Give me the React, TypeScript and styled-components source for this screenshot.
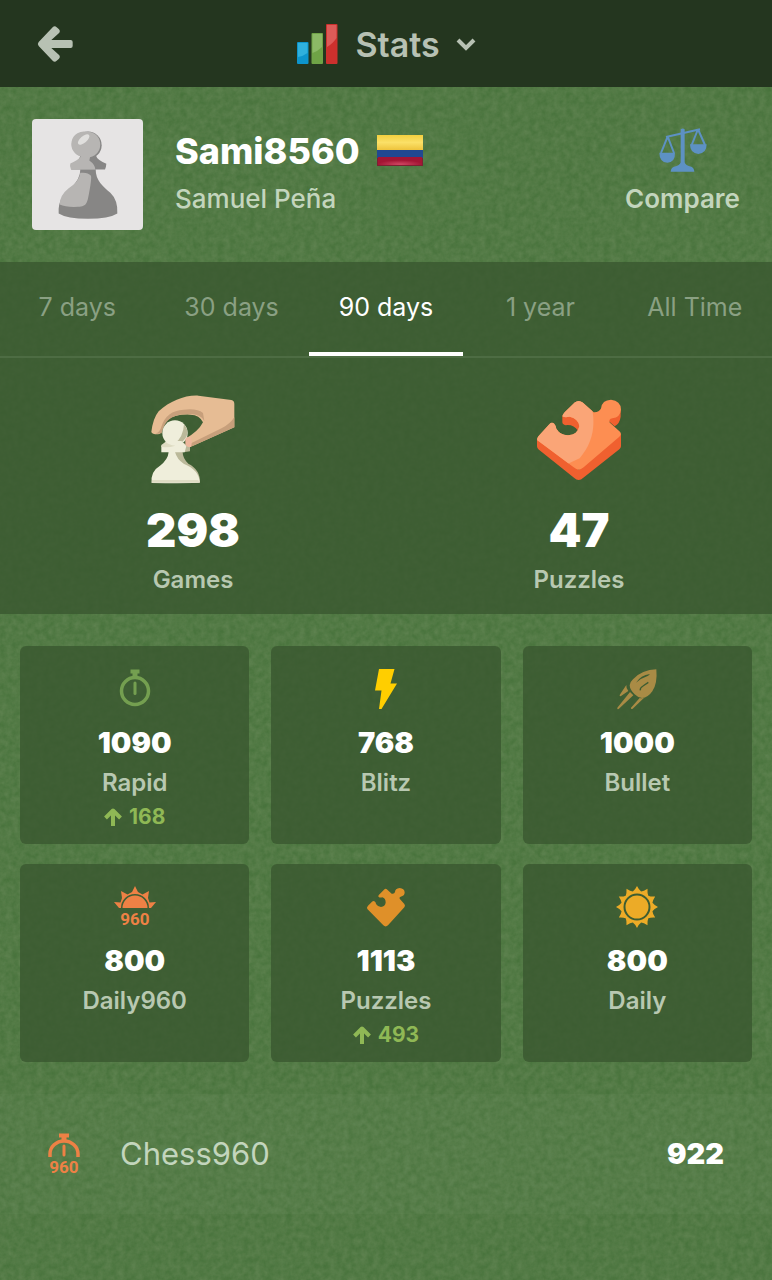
import React, { useState } from "react";
import styled, { createGlobalStyle } from "styled-components";

const grain = encodeURIComponent(
  `<svg xmlns="http://www.w3.org/2000/svg" width="386" height="386"><filter id="f" x="0" y="0" width="100%" height="100%"><feTurbulence type="fractalNoise" baseFrequency="0.16" numOctaves="3" seed="4" stitchTiles="stitch"/><feColorMatrix values="0 0 0 0 0.42  0 0 0 0 0.48  0 0 0 0 0.3  0.28 0 0 0 -0.04"/></filter><rect width="386" height="386" filter="url(#f)"/></svg>`
);

const GlobalStyle = createGlobalStyle`
  *, *::before, *::after { box-sizing: border-box; }
  body {
    margin: 0;
    min-height: 100vh;
    background: #48733c url("data:image/svg+xml,${grain}");
    font-family: Inter, "Liberation Sans", sans-serif;
    color: #ffffff;
  }
  h1, h2, p { margin: 0; padding: 0; }
  button { font: inherit; color: inherit; background: none; border: 0; padding: 0; cursor: pointer; }
  svg { display: block; flex: none; overflow: visible; }
`;

const Header = styled.header`
  display: grid;
  grid-template-columns: 36px 1fr 36px;
  align-items: center;
  height: 87px;
  padding: 0 37px;
  background: #24361f;
`;

const TitleButton = styled.button`
  display: flex;
  align-items: center;
  justify-self: center;
  gap: 17px;
  padding-top: 2px;
  color: #b7c1b3;
`;

const Title = styled.h1`
  font-size: 34px;
  line-height: 40px;
  font-weight: 600;
`;

const Profile = styled.section`
  display: flex;
  align-items: center;
  gap: 32px;
  padding: 32px;
`;

const Avatar = styled.div`
  display: grid;
  place-items: center;
  width: 111px;
  height: 111px;
  border-radius: 4px;
  background: #e6e4e4;
`;

const Identity = styled.div`
  flex: 1;
  display: flex;
  flex-direction: column;
  gap: 10px;
  padding-bottom: 6px;
`;

const NameLine = styled.div`
  display: flex;
  align-items: center;
  gap: 17px;
`;

const UserName = styled.h2`
  font-size: 36px;
  line-height: 44px;
  font-weight: 800;
`;

const FullName = styled.p`
  font-size: 26px;
  line-height: 32px;
  font-weight: 500;
  color: #c3d5bd;
`;

const CompareButton = styled.button`
  display: flex;
  flex-direction: column;
  align-items: center;
  gap: 11px;
  padding-bottom: 7px;
  font-size: 26px;
  line-height: 32px;
  font-weight: 600;
  color: #c3d5bd;
`;

const Summary = styled.section`
  background: #3a582fcc;
`;

const Tabs = styled.nav`
  display: grid;
  grid-template-columns: repeat(5, 1fr);
  height: 96px;
  border-bottom: 2px solid #4d6c43;
`;

const Tab = styled.button<{ $active: boolean }>`
  border-bottom: 4px solid ${(p) => (p.$active ? "#ffffff" : "transparent")};
  font-size: 25px;
  line-height: 32px;
  font-weight: 400;
  color: ${(p) => (p.$active ? "#ffffff" : "#8aa083")};
`;

const Totals = styled.div`
  display: grid;
  grid-template-columns: 1fr 1fr;
  padding: 36px 0 18px;
`;

const Total = styled.div`
  display: flex;
  flex-direction: column;
  align-items: center;
`;

const TotalArt = styled.div`
  display: grid;
  place-items: center;
  height: 92px;
`;

const TotalValue = styled.p`
  margin-top: 16px;
  font-size: 47px;
  line-height: 56px;
  font-weight: 900;
`;

const TotalLabel = styled.p`
  margin-top: 6px;
  font-size: 24px;
  line-height: 32px;
  font-weight: 600;
  color: #b8c8b1;
`;

const Ratings = styled.section`
  display: grid;
  grid-template-columns: repeat(3, 1fr);
  gap: 20px 22px;
  padding: 32px 20px;
`;

const RatingCard = styled.button`
  display: flex;
  flex-direction: column;
  align-items: center;
  height: 198px;
  padding-top: 22px;
  border-radius: 6px;
  background: #3a582fcc;
`;

const RatingValue = styled.span`
  margin-top: 15px;
  font-size: 29px;
  line-height: 36px;
  font-weight: 900;
`;

const RatingLabel = styled.span`
  margin-top: 7px;
  font-size: 24px;
  line-height: 30px;
  font-weight: 600;
  color: #b8c8b1;
`;

const Change = styled.span`
  display: flex;
  align-items: center;
  gap: 7px;
  margin-top: 5px;
  font-size: 21px;
  line-height: 28px;
  font-weight: 700;
  color: #8fb855;
`;

const ExtraRow = styled.button`
  display: flex;
  align-items: center;
  width: 100%;
  height: 120px;
  padding: 0 48px;
  gap: 40px;
  background: #ffffff06;
  text-align: left;
`;

const ExtraLabel = styled.span`
  flex: 1;
  font-size: 31px;
  line-height: 40px;
  color: #c3d5bd;
`;

const ExtraValue = styled.span`
  font-size: 29px;
  line-height: 36px;
  font-weight: 900;
`;

const BackIcon = () => (
  <svg width="36" height="36" viewBox="0 0 106 108" fill="#b7c1b3" aria-hidden="true">
    <path d="M4 48 46 4q6-6 12 0l7 6q5 5 1 10L42 42h58q6 0 6 6v12q0 6-6 6H42l24 22q4 5-1 10l-7 6q-6 6-12 0L4 60q-5-6 0-12z" />
  </svg>
);

const BarsIcon = () => (
  <svg width="41" height="41" viewBox="0 0 41 41" aria-hidden="true">
    <rect x="0" y="18" width="11.5" height="22" rx="1" fill="#0d95cc" />
    <path d="M1 19h9.500v10q-4 3-9.500 4z" fill="#2fb1dd" />
    <rect x="14.500" y="9" width="11.500" height="31" rx="1" fill="#6fa346" />
    <path d="M15.500 10H25v13q-4 4-9.500 6z" fill="#8bb966" />
    <rect x="29" y="0" width="11.500" height="40" rx="1" fill="#cc302d" />
    <path d="M30 1h9.500v13q-4 6-9.500 9z" fill="#dc5b58" />
  </svg>
);

const ChevronIcon = () => (
  <svg width="18" height="14" viewBox="1 0 18 14" fill="none" stroke="#b7c1b3" strokeWidth="4" aria-hidden="true">
    <path d="m2 2 8 8 8-8" />
  </svg>
);

const AvatarPawn = () => (
  <svg width="60" height="90" viewBox="172 390 180 267" aria-hidden="true">
    <g fill="#878685">
      <circle cx="262" cy="434" r="41" />
      <path d="M240 465h46q2 12 31 25-1 12-4 17H211l18-20z" />
      <path d="M239 506h46c0 35 22 51 44 71q23 22 21 62-25 16-88 16t-88-16c-2-42 14-53 35-76q30-25 30-57z" />
    </g>
    <path d="M259 394a35 38 0 0 1 9 76l-2 10q17 12 18 27h-73q-5-10-2-18 24-10 32-21A38 38 0 0 1 259 394z" fill="#b7b5b3" />
    <path d="M239 517q22-3 32 9 2 8-4 42c-7 39-7 50-35 51q-36 2-55-7 0-27 26-48 33-20 36-47z" fill="#b7b5b3" />
    <ellipse cx="249" cy="417" rx="21" ry="10" transform="rotate(-40 249 417)" fill="#e0dfdd" />
  </svg>
);

const ColombiaFlag = () => (
  <svg width="46" height="31" viewBox="0 0 46 31" role="img" aria-label="Colombia">
    <defs>
      <linearGradient id="co-yellow" x2="0" y2="1">
        <stop offset="0" stopColor="#f3cf3f" />
        <stop offset=".5" stopColor="#fbe067" />
        <stop offset="1" stopColor="#eec33c" />
      </linearGradient>
      <radialGradient id="co-red" cy=".9">
        <stop offset="0" stopColor="#d04662" />
        <stop offset="1" stopColor="#a31534" />
      </radialGradient>
    </defs>
    <rect width="46" height="31" fill="#7c2132" />
    <rect width="46" height="15" fill="url(#co-yellow)" />
    <rect y="15" width="46" height="8" fill="#214891" />
    <rect x="1" y="22" width="44" height="8" fill="url(#co-red)" />
  </svg>
);

const ScalesIcon = () => (
  <svg width="48" height="44" viewBox="929 56 144 130" fill="#5d91c3" aria-hidden="true">
    <path d="M994 59q6-5 12 0v99q2 10 20 13 8 3 9 15h-71q1-12 10-15 18-3 20-13z" />
    <path d="M950 82 1052 59M954 83l-19 47M956 83l18 47M1045 61l-18 45M1047 61l20 45" fill="none" stroke="#5d91c3" strokeWidth="6" />
    <path d="M930 129h47q1 28-23 30-24-2-24-30zM1022 104h50q0 27-25 29-25-2-25-29z" />
  </svg>
);

const GamesArt = () => (
  <svg width="86" height="90" viewBox="90 45 258 270" aria-hidden="true">
    <path d="M94 156q5-41 22-62c35-31 78-49 119-47l99 13q9 2 9 12v70l-127 57q-15 5-18-7v-17q38-22 51-48-10-22-38-23-48-2-70 17-15 13-19 37-2 5-9 5-17 0-19-7z" fill="#e6bc94" />
    <path d="M124 140q15-48 67-51 40-5 58 10l4 24q-11-21-44-21-44-1-63 17-15 13-21 41-13 2-19 0 14-3 18-20zM343 112v30l-127 57q-15 3-18-7 18-1 35-12l73-36q23-11 37-32z" fill="#c79f7b" />
    <circle cx="165" cy="159" r="38" fill="#efeedb" />
    <path d="M192 133q23 28-6 53l14 8 10 7v13l-20 3-11-12-17-12q28-20 30-60zM146 216h42q0 19 17 35 36 18 35 57H177z" fill="#bbb99a" />
    <path d="M137 183h47l15 15-5 19H124v-20l13-4zM146 216h19q6 22 26 35 47 19 48 56-9 4-144 2-4-35 25-52 24-18 26-41z" fill="#efeedb" />
    <path d="M137 185q8 9 29 12-18 6-42 4v-6zM96 300l137 0q6 2 6 8H95z" fill="#dedcc3" />
    <path d="M196 176q4-6 16-6 6 15 1 31-15 1-17-10z" fill="#edb79d" />
  </svg>
);

const pieceFace =
  "M82 180q-2-8 8-17l28-31q7-7 14-2 7 8 7 16 12 20 36 19 28-2 33-27-4-23-29-28-15 3-21-1-1-6 6-13l30-29q12-9 24 0l33 29q16 1 22-11 3-25 30-26 29 3 30 29-2 24-26 26-12 2-8 13l30 27q8 7-1 16L220 262q-14 13-28 0z";

const PuzzlesArt = () => (
  <svg width="86" height="82" viewBox="78 57 258 245" aria-hidden="true">
    <defs>
      <clipPath id="piece-face"><path d={pieceFace} /></clipPath>
    </defs>
    <path d="M81 174h4l121 95 127-109v38q0 5-5 9L220 293q-14 13-28 0L85 207q-4-4-4-9zM157 106v20q0 6 10 9 24-3 37 17 12-14 6-30-9-16-31-16zM276 88h56v22q-3 22-18 28l-20-17z" fill="#f0602f" />
    <path d={pieceFace} fill="#fd8e52" />
    <path d="M240 60q31 103-31 174L70 300V55z" fill="#faa577" clipPath="url(#piece-face)" />
  </svg>
);

const RapidIcon = () => (
  <svg width="40" height="42" viewBox="0 0 40 42" fill="none" stroke="#749f50" aria-hidden="true">
    <circle cx="20" cy="23" r="13.500" strokeWidth="3.500" />
    <path d="M15.500 3.500h9" strokeWidth="4" />
    <path d="M20 3v7" strokeWidth="5" />
    <path d="M20 15v10.500" strokeWidth="3" strokeLinecap="round" />
  </svg>
);

const BlitzIcon = () => (
  <svg width="40" height="42" viewBox="0 0 40 42" fill="#ffce00" aria-hidden="true">
    <path d="M13 1h15.500L24.500 15.500H31L15.500 41H13L15.500 22.500H9z" />
  </svg>
);

const BulletIcon = () => (
  <svg width="42" height="42" viewBox="0 0 126 126" fill="#a98b45" aria-hidden="true">
    <path d="M121 4q4 42-12 66-13 19-31 20-14-2-22-11-14-13-15-27 0-9 10-18Q78 5 121 4z" />
    <path d="M60 44q14-22 42-26-4 6-14 9-16 5-28 17z" fill="#3d5d32" />
    <path d="m97 43-16 11q-10 6-8 13" fill="none" stroke="#3d5d32" strokeWidth="4" />
    <path d="M31 51q-1 11 6 18L14 85q-4 0-3-4zM42 72l10 10-44 41q-5 2-4-4zM71 90q9 2 15-2l-36 34q-6 3-5-3z" />
  </svg>
);

const IconDigits = styled.text`
  font-family: Roboto, "Liberation Sans", sans-serif;
  font-size: 17px;
  font-weight: 700;
`;

const Daily960Icon = () => (
  <svg width="42" height="42" viewBox="0 0 42 42" fill="#ee8145" aria-hidden="true">
    <path d="m0 16 6.500.5L8 12 7 5l6.500 3.500L18 6l3-6 3 6 4.500 2.500L35 5l-1 7 1.500 4.500L42 16l-5 6h-2A14 14 0 0 0 7 22H5z" />
    <path d="M8.500 22a12.500 12.500 0 0 1 25 0z" />
    <IconDigits x="21" y="39" textAnchor="middle">960</IconDigits>
  </svg>
);

const PuzzleIcon = () => (
  <svg width="40" height="42" viewBox="826 50 120 126" aria-hidden="true">
    <path d="M830 119q-3-5 2-10l12-12q5-4 9 0 3 3 3 7 6 9 15 9 12-2 14-13 0-13-10-16-7 2-11-1-3-3 1-7l15-15q5-5 10 0l13 12q8 2 10-5 0-11 14-12 14 1 15 13 0 11-12 13-5 1-3 6l14 16q4 5 0 10l-49 54q-7 7-14 0z" fill="#df9029" />
  </svg>
);

const sunRays = Array.from({ length: 12 }, (_, i) => {
  const at = (deg: number, r: number) => {
    const a = ((deg - 90) * Math.PI) / 180;
    return `${21 + r * Math.cos(a)} ${21 + r * Math.sin(a)}`;
  };
  return `${i === 0 ? "M" : "L"}${at(i * 30, 21)}Q${at(i * 30 + 7, 17)} ${at(i * 30 + 15, 16)}Q${at(i * 30 + 23, 17)} ${at(i * 30 + 30, 21)}`;
}).join("");

const DailyIcon = () => (
  <svg width="42" height="42" viewBox="0 0 42 42" aria-hidden="true">
    <path d={sunRays} fill="#ecab27" />
    <circle cx="21" cy="21" r="12.500" fill="none" stroke="#3d5d32" strokeWidth="2" />
  </svg>
);

const Chess960Icon = () => (
  <svg width="32" height="44" viewBox="0 0 32 44" fill="none" stroke="#ee8145" aria-hidden="true">
    <path d="M2 25V22a14 13 0 0 1 28 0v3" strokeWidth="3.500" />
    <path d="M11 3.500h10" strokeWidth="4" />
    <path d="M16 3v7" strokeWidth="5" />
    <path d="M16 14v9" strokeWidth="3" strokeLinecap="round" />
    <IconDigits x="16" y="41" textAnchor="middle" fill="#ee8145" stroke="none">960</IconDigits>
  </svg>
);

const UpArrow = () => (
  <svg width="18" height="18" viewBox="0 0 18 18" fill="none" stroke="currentColor" strokeWidth="4" strokeLinejoin="round" aria-hidden="true">
    <path d="M1.500 10 9 2.500l7.500 7.500M9 3v15" />
  </svg>
);

const periods = ["7 days", "30 days", "90 days", "1 year", "All Time"];

const totals = [
  { label: "Games", value: 298, art: <GamesArt /> },
  { label: "Puzzles", value: 47, art: <PuzzlesArt /> },
];

const ratings = [
  { label: "Rapid", value: 1090, change: 168, icon: <RapidIcon /> },
  { label: "Blitz", value: 768, icon: <BlitzIcon /> },
  { label: "Bullet", value: 1000, icon: <BulletIcon /> },
  { label: "Daily960", value: 800, icon: <Daily960Icon /> },
  { label: "Puzzles", value: 1113, change: 493, icon: <PuzzleIcon /> },
  { label: "Daily", value: 800, icon: <DailyIcon /> },
];

export default function App() {
  const [period, setPeriod] = useState("90 days");

  return (
    <>
      <GlobalStyle />
      <Header>
        <button aria-label="Back"><BackIcon /></button>
        <TitleButton>
          <BarsIcon />
          <Title>Stats</Title>
          <ChevronIcon />
        </TitleButton>
      </Header>
      <main>
        <Profile>
          <Avatar><AvatarPawn /></Avatar>
          <Identity>
            <NameLine>
              <UserName>Sami8560</UserName>
              <ColombiaFlag />
            </NameLine>
            <FullName>Samuel Peña</FullName>
          </Identity>
          <CompareButton>
            <ScalesIcon />
            Compare
          </CompareButton>
        </Profile>
        <Summary>
          <Tabs>
            {periods.map((name) => (
              <Tab key={name} $active={name === period} aria-pressed={name === period} onClick={() => setPeriod(name)}>
                {name}
              </Tab>
            ))}
          </Tabs>
          <Totals>
            {totals.map((t) => (
              <Total key={t.label}>
                <TotalArt>{t.art}</TotalArt>
                <TotalValue>{t.value}</TotalValue>
                <TotalLabel>{t.label}</TotalLabel>
              </Total>
            ))}
          </Totals>
        </Summary>
        <Ratings>
          {ratings.map((r) => (
            <RatingCard key={r.label}>
              {r.icon}
              <RatingValue>{r.value}</RatingValue>
              <RatingLabel>{r.label}</RatingLabel>
              {r.change !== undefined && (
                <Change><UpArrow />{r.change}</Change>
              )}
            </RatingCard>
          ))}
        </Ratings>
        <ExtraRow>
          <Chess960Icon />
          <ExtraLabel>Chess960</ExtraLabel>
          <ExtraValue>922</ExtraValue>
        </ExtraRow>
      </main>
    </>
  );
}
